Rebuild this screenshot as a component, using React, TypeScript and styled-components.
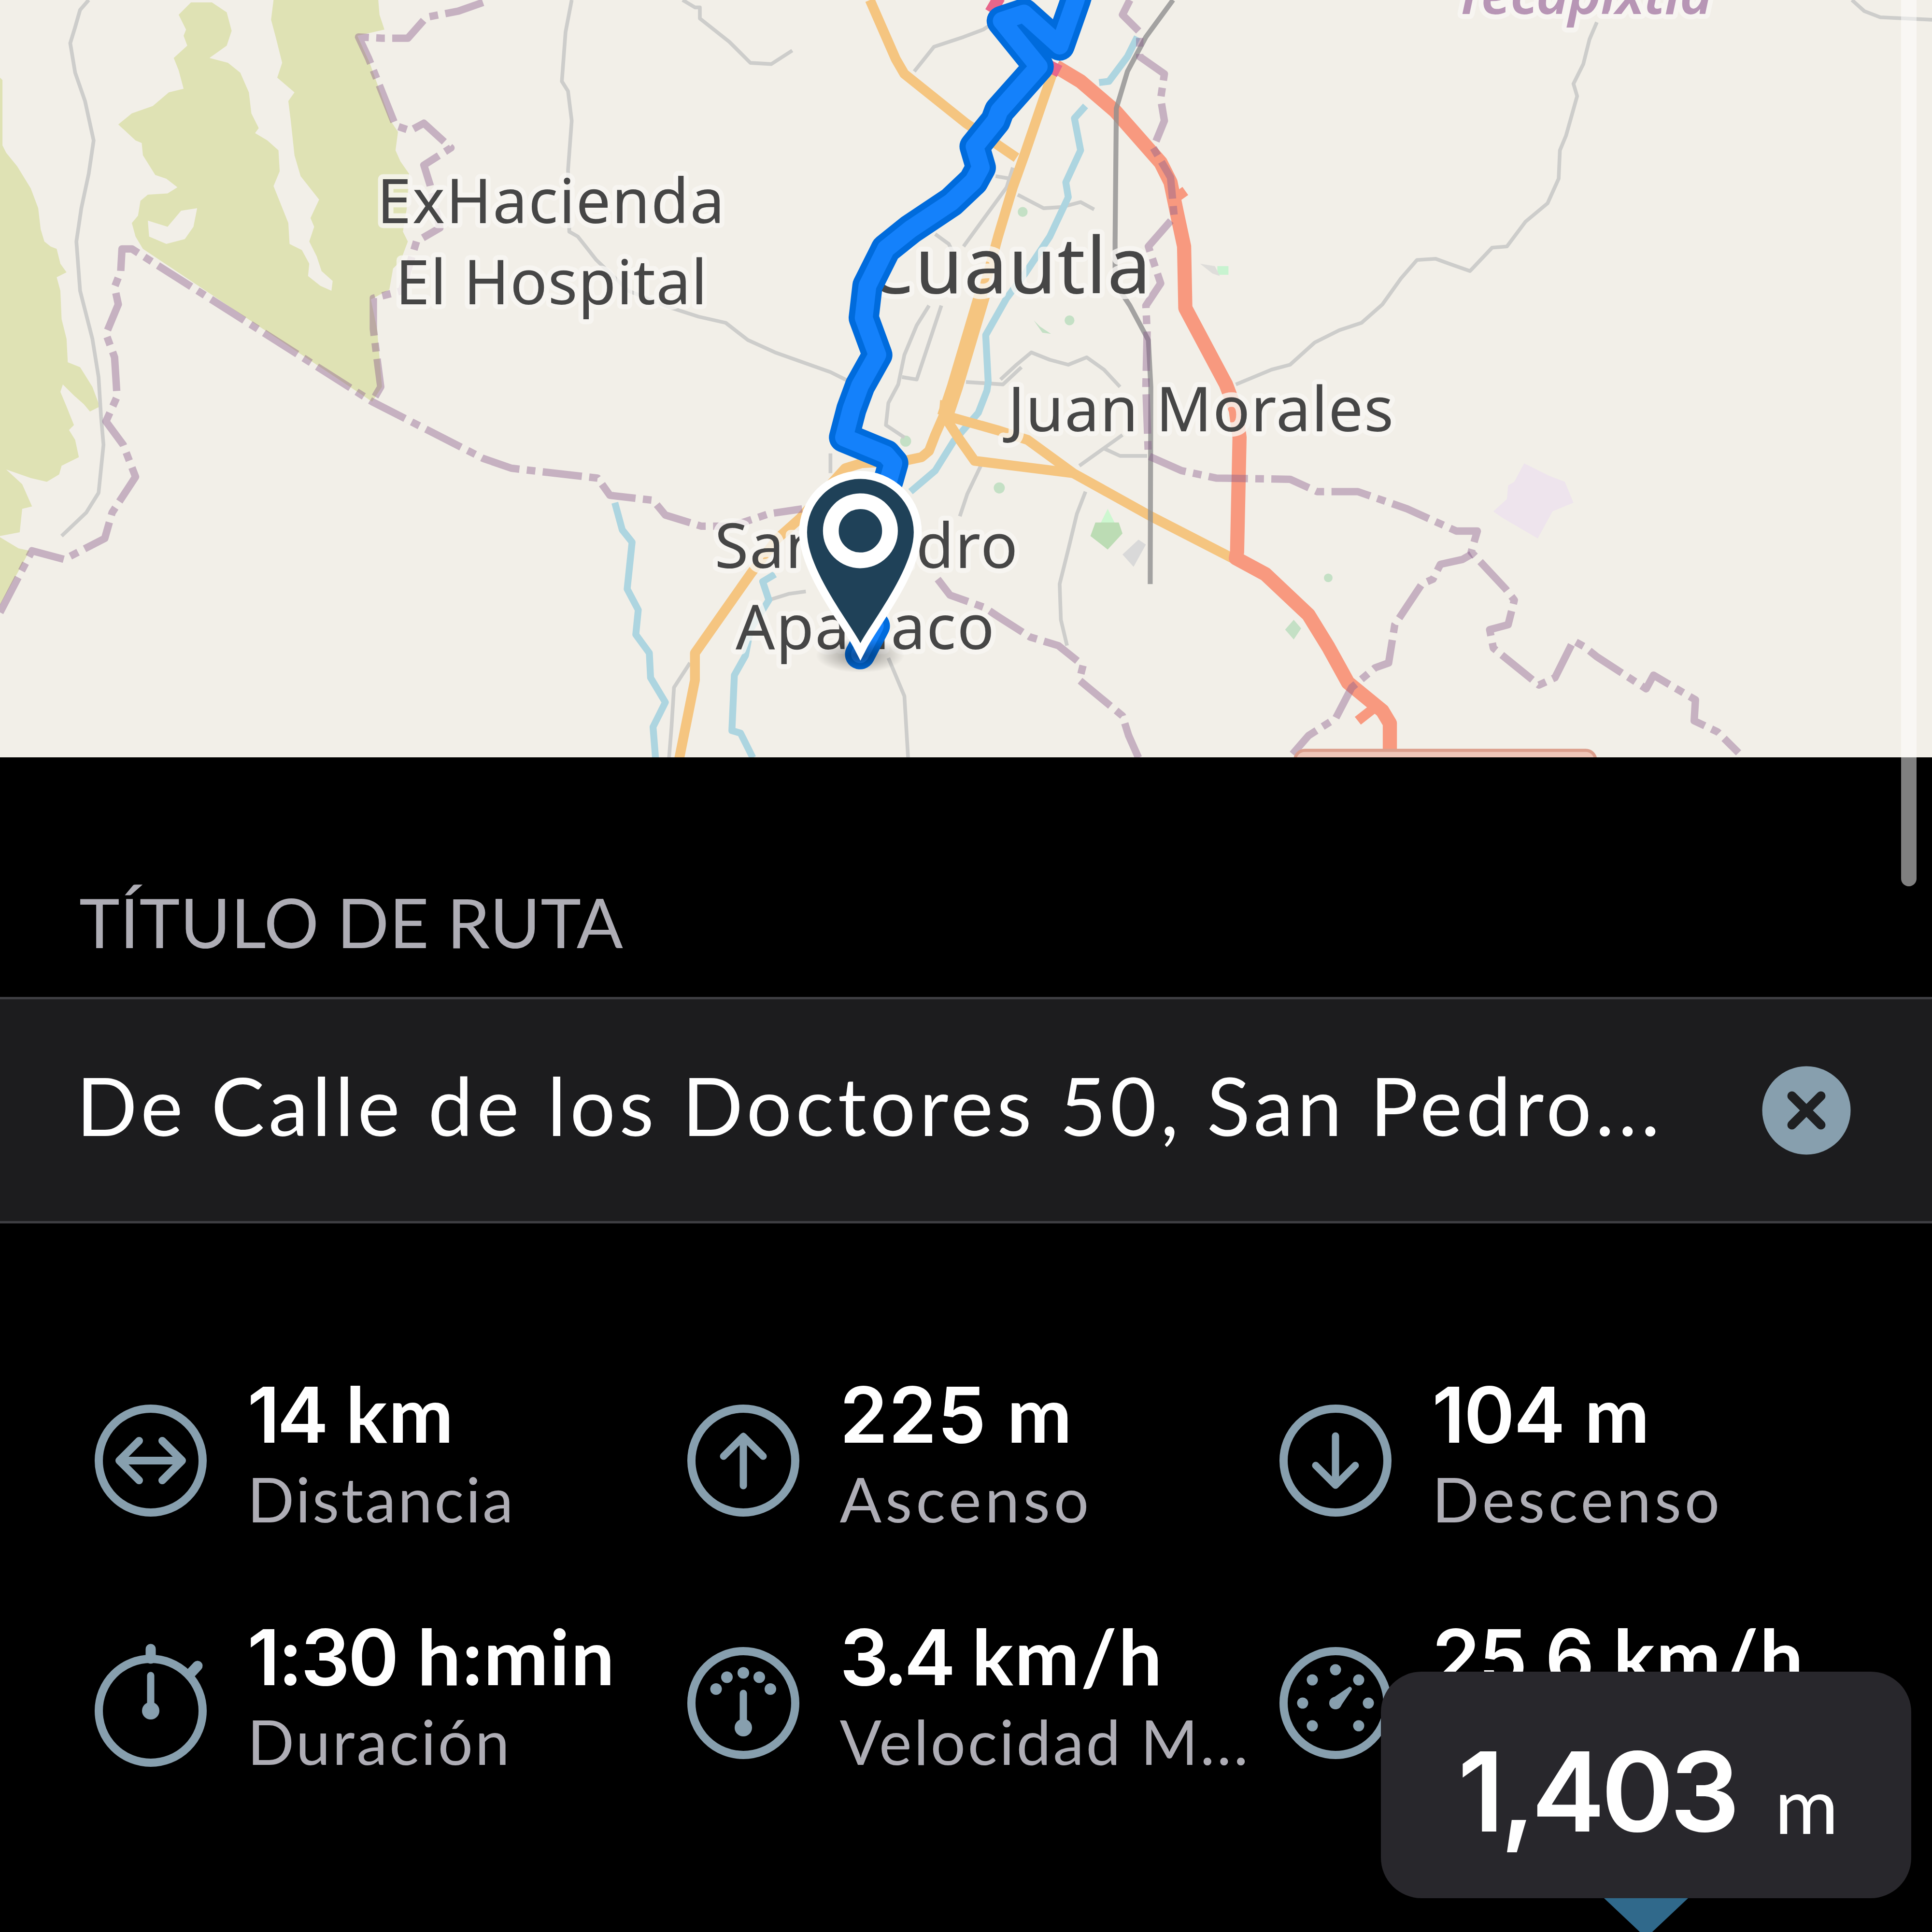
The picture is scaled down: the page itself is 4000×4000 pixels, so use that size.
import React from 'react';
import styled, { createGlobalStyle } from 'styled-components';

const GlobalStyle = createGlobalStyle`
  *{
    box-sizing: border-box;
    margin: 0;
    padding: 0;
  }

  body{
    background: #000;
    font-family: Lato, 'Open Sans', sans-serif;
  }
`;

const Screen = styled.div`
  position: relative;
  width: 4000px;
  height: 4000px;
  overflow: hidden;
  background: #000;
  color: #fff;

  display: flex;
  flex-direction: column;
`;

const MapSvg = styled.svg`
  display: block;
  width: 4000px;
  height: 1568px;
  flex-shrink: 0;
  background: #f2efe8;

  .green{ fill: #dfe2b4; }
  .minor{ fill: none; stroke: #cdcdcb; stroke-width: 3; stroke-linejoin: round; }
  .rail{ fill: none; stroke: #8f8f8f; stroke-opacity: 0.8; stroke-width: 4; stroke-linejoin: round; }
  .river{ fill: none; stroke: #add5e0; stroke-width: 5.6; stroke-linejoin: round; }
  .orange{ fill: none; stroke: #f5c580; stroke-width: 8; stroke-linejoin: round; }
  .red{ fill: none; stroke: #f8997f; stroke-width: 11.5; stroke-linejoin: round; }
  .border{ fill: none; stroke: #8c5f8e; stroke-opacity: 0.43; stroke-width: 6; stroke-dasharray: 32 6 7 6; stroke-linejoin: round; }
`;

const PlaceName = styled.text<{ $size?: number }>`
  font-family: 'Noto Sans', sans-serif;
  font-size: ${p => p.$size || 50}px;
  fill: #464646;
  stroke: #f8f6f2;
  stroke-opacity: 0.8;
  stroke-width: 8px;
  stroke-linejoin: round;
  paint-order: stroke;
`;

const RegionName = styled(PlaceName)`
  font-style: italic;
  font-weight: 600;
  fill: #b795b5;
`;

const Scrollbar = styled.div`
  position: absolute;
  top: -40px;
  right: 32px;
  width: 32px;
  height: 1875px;
  border-radius: 16px;
  background: rgba(255, 255, 255, 0.5);
`;

const SectionTitle = styled.h2`
  height: 496px;
  padding: 0 164px 85px;
  color: #aeadb5;
  font-size: 142px;
  font-weight: 400;
  line-height: 142px;
  letter-spacing: 0.5px;

  display: flex;
  align-items: flex-end;
`;

const Field = styled.div`
  height: 469px;
  padding: 0 168px 0 158px;
  background: #1c1c1e;
  border-top: 5px solid #3e3e42;
  border-bottom: 5px solid #3e3e42;

  display: flex;
  align-items: center;
  justify-content: space-between;

  span{
    padding-bottom: 22px;
    font-size: 166px;
    letter-spacing: 7.9px;
    white-space: nowrap;
  }
`;

const ClearButton = styled.button`
  width: 184px;
  height: 184px;
  border: none;
  background: none;

  svg{
    display: block;
    width: 100%;
    height: 100%;
  }
`;

const Stats = styled.section`
  padding: 323px 0 0 182px;

  display: grid;
  grid-template-columns: repeat(3, 1226.5px);
  grid-auto-rows: 501.5px;
`;

const Stat = styled.div`
  height: 336px;

  display: flex;
  align-items: center;
  gap: 70px;
`;

const StatIcon = styled.svg`
  width: 260px;
  height: 260px;
  flex-shrink: 0;
  overflow: visible;
  fill: none;
  stroke: #879fae;
  stroke-width: 17;
  stroke-linecap: round;
  stroke-linejoin: round;

  .dot{
    fill: #879fae;
    stroke: none;
  }
`;

const StatText = styled.div`
  padding-bottom: 20px;
  white-space: nowrap;
`;

const Value = styled.strong`
  display: block;
  height: 177px;
  font-size: 160px;
  font-weight: 700;
  line-height: 165px;
  letter-spacing: 3px;
`;

const Digits = styled.span<{ $tracking: number }>`
  font-family: Inter, sans-serif;
  font-weight: 600;
  letter-spacing: ${p => p.$tracking}px;
`;

const Label = styled.p<{ $tracking: number }>`
  height: 165px;
  color: #aeadb5;
  font-size: 128px;
  line-height: 165px;
  letter-spacing: ${p => p.$tracking}px;
`;

const Tooltip = styled.div`
  position: absolute;
  left: 2859px;
  top: 3461px;
  width: 1098px;
  height: 469px;
  border-radius: 84px;
  background: #28272c;
  padding: 0 151px 136px 159px;

  display: flex;
  align-items: flex-end;
  justify-content: space-between;

  b{
    font-family: Inter, sans-serif;
    font-size: 228px;
    font-weight: 600;
    line-height: 170px;
    letter-spacing: -8px;
  }

  small{
    font-size: 160px;
    line-height: 118px;
  }
`;

const Pointer = styled.svg`
  position: absolute;
  left: 3321px;
  top: 3930px;
  width: 174px;
  height: 82px;
`;

const minorRoads = [
  '72,0 65,8 61,22 57,35 61,59 69,82 76,114 72,141 66,169 62,196 65,236 75,275 80,306 82,338 84,361 80,400 70,416 50,435',
  '464,0 459,26 456,66 461,74 464,98 461,138 462,188 469,192 484,211 510,236 542,249 567,257 589,262 607,276 629,286 674,302 688,309',
  '554,0 564,6 568,6 568,15 592,34 609,51 626,52 643,41',
  '742,58 758,38 782,30 798,24 810,16',
  '1296,18 1290,32 1285,52 1277,68 1280,78 1271,110 1266,122 1265,145 1256,165 1238,180 1223,200 1211,201 1193,220 1176,214 1165,210 1150,211 1137,226 1122,247 1105,262 1087,268 1067,278 1047,296 1032,300 1003,312',
  '1503,0 1513,9 1526,14 1568,16',
  '822,136 817,152 782,200',
  '820,145 808,143',
  '754,248 744,264 734,288 729,312 721,327 719,345 734,355',
  '759,190 770,198 776,210',
  '764,248 752,284 744,308 732,306',
  '826,158 847,169 862,168 877,164 888,170',
  '812,308 825,296 837,286 852,292 867,296 882,290 896,300 909,314',
  '784,310 814,312 829,298',
  '624,487 640,482 654,480',
  '674,368 674,384',
  '560,538 547,558 545,590 543,615',
  '721,534 734,565 737,615',
  '779,419 785,401 796,378',
  '911,353 876,378',
  '881,399 874,417 867,446 860,474 861,503 866,524',
  '896,364 909,370 931,370',
];

const rivers = [
  '923,30 915,46 900,66 892,67',
  '881,86 872,96 877,122 865,148 867,160 852,192 832,222 817,242 800,272 802,310 801,317 794,335 774,358 759,382 739,399',
  '629,466 619,472 624,487 609,511 605,532 596,548 594,593 601,595 611,615',
  '499,408 505,430 513,440 509,478 518,495 516,515 527,530 528,550 540,570 530,590 532,615',
];

const borders = [
  '392,2 372,9 346,14 331,31 310,31 291,30 299,47 321,102 333,106 344,100 366,120 355,127 344,134 349,150 357,185 338,196 326,236 303,242 303,267 306,291 309,314 302,326',
  '0,497 26,447 52,454 85,437 91,416 110,387 100,361 86,342 95,322 93,290 86,271 96,247 93,233 98,220 99,202 107,202 302,326 392,372 415,380 485,388 495,402 530,406 540,418 569,427 594,427 624,417 651,413',
  '761,470 771,483 799,493 811,501 836,517 859,524 879,540 876,552 911,581 916,597 924,615',
  '917,0 911,12 925,26 925,46 945,60 942,80 945,98 936,120 950,144 953,176 932,200 942,230 930,248 931,270 930,314 932,370 959,382 987,388 1047,389 1069,399 1102,399 1142,413 1182,431 1199,431 1194,448 1222,478 1229,487 1224,507 1209,511 1212,526 1249,556 1262,550 1277,520 1286,525 1296,533 1336,559 1342,548 1376,568 1375,585 1394,594 1411,611',
  '1194,450 1187,454 1169,458 1163,470 1154,474 1132,507 1127,538 1116,542 1097,558 1084,583 1062,597 1049,612',
];

const route = '879,-20 873,0 860,37 831,11 813,17 843,54 811,90 808,98 791,119 796,136 790,147 772,164 739,186 719,202 704,232 701,258 712,288 698,313 691,332 685,355 719,369 725,376 721,390 700,440 682,484 710,508 698,531';

const stats = [
  { value: '14', unit: ' km', label: 'Distancia', icon: 'distance', tracking: -6, labelTracking: 4 },
  { value: '225', unit: ' m', label: 'Ascenso', icon: 'up', tracking: 1.5, labelTracking: 7.8 },
  { value: '104', unit: ' m', label: 'Descenso', icon: 'down', tracking: -2, labelTracking: 7 },
  { value: '1:30', unit: ' h:min', label: 'Duración', icon: 'time', tracking: -4, labelTracking: 4.3 },
  { value: '3.4', unit: ' km/h', label: 'Velocidad M...', icon: 'average', tracking: -8, labelTracking: 4.4 },
  { value: '25.6', unit: ' km/h', label: '', icon: 'max', tracking: -3, labelTracking: 4 },
];

function RouteMap() {
  return (
    <MapSvg viewBox="0 0 1568 614.66" preserveAspectRatio="none">
      <polygon className="green" points="0,63 2,65 2,118 5,124 14,135 25,153 31,169 33,186 36,196 41,200 46,202 49,214 54,221 46,225 49,236 50,259 54,275 55,294 65,298 75,314 81,330 73,334 68,328 60,321 51,312 49,318 54,330 60,345 56,349 61,357 64,371 50,378 48,385 38,391 25,388 5,381 18,393 26,411 18,413 16,432 0,435" />
      <polygon className="green" points="0,436 15,445 24,447 0,491" />
      <path
        className="green"
        fillRule="evenodd"
        d="M155 2L145 12 151 24 149 29 152 37 141 47 145 57 149 72 137 75 124 86 107 92 96 101 110 114 115 116 116 126 126 142 135 145 144 152 136 157 120 158 114 163 112 175 107 181 110 192 116 202 302 326 310 314 306 267 301 243 316 235 319 218 325 212 331 196 327 188 330 170 332 141 325 131 321 122 323 107 317 98 300 51 290 29 312 24 308 12 307 0 222 0 220 16 224 31 229 51 225 63 239 75 234 82 236 98 239 126 244 143 259 162 252 177 255 184 251 196 257 208 261 220 270 228 269 236 260 232 250 224 251 214 245 203 235 198 234 181 226 161 222 151 227 139 226 122 217 114 207 108 210 104 204 92 202 75 195 59 185 51 170 47 184 37 188 25 184 10 172 2ZM120 179L136 184 147 171 160 169 157 184 150 194 135 198 121 192Z"
      />
      <polygon fill="#eee4ed" points="1237,376 1257,386 1270,391 1277,408 1260,415 1248,437 1219,420 1212,415 1223,405 1224,394 1229,391" />
      <polygon fill="#cdf7d0" points="899,413 893,425 905,425" />
      <polygon fill="#bcdcb4" points="889,424 908,424 911,433 899,446 885,435" />
      <polygon fill="#d9d9d9" points="911,450 924,438 930,442 920,460" />
      <g fill="#c4e0c5">
        <circle cx="811" cy="396" r="4.5" />
        <circle cx="735" cy="358" r="4.5" />
        <circle cx="1078" cy="469" r="3.5" />
        <circle cx="868" cy="260" r="4" />
        <circle cx="830" cy="172" r="4" />
        <polygon points="1050,503 1056,510 1050,519 1043,511" />
        <polygon fill="#c8f3d0" points="988,216 997,216 997,223 988,223" />
        <polygon points="839,260 844,265 853,271 846,270" />
      </g>
      <path d="M974 214L986 216 990 224 984 222Z" fill="#deddda" />

      {minorRoads.map(points => <polyline key={points} className="minor" points={points} />)}
      {rivers.map(points => <polyline key={points} className="river" points={points} />)}

      <polyline className="orange" points="706,0 727,48 734,60 784,100 825,128" />
      <polyline className="orange" points="854,60 845,86 832,124 822,152 810,192 797,240" />
      <polyline className="orange" style={{ strokeWidth: 13 }} points="797,240 775,314 767,338" />
      <polyline className="orange" points="767,325 766,337 759,353 754,366 748,371 734,374 699,376 686,380 649,421 631,437 609,466 564,530 564,552 551,617" />
      <polyline className="orange" points="766,337 809,349 834,357 871,384 934,419 1004,455" />
      <polyline className="orange" points="766,337 779,357 791,374 831,379 871,384" />
      <path d="M804 10L811 -2" stroke="#e8668a" strokeWidth="10" />
      <polyline className="red" points="857,54 877,66 905,90 942,132 950,148 955,172 961,200 962,250 995,312 1003,333 1006,355 1004,448 1003,453 1027,466 1062,499 1078,525 1094,554 1122,577 1128,587 1128,612" />
      <path className="red" d="M1102 585L1116 574M955 160L962 155" style={{ strokeWidth: 8 }} />
      <path d="M852 54L860 58" stroke="#e8668a" strokeWidth="10" />
      <polyline className="rail" points="952,0 930,30 915,58 906,88 905,196 905,230 917,248 932,276 934,314 933.5,474" />
      {borders.map(points => <polyline key={points} className="border" points={points} />)}
      <rect x="1051" y="609" width="244" height="40" rx="8" fill="#eec5b7" stroke="#dc9f8d" strokeWidth="2.5" />

      <PlaceName x="306" y="181" textLength="282">ExHacienda</PlaceName>
      <PlaceName x="321" y="247" textLength="253">El Hospital</PlaceName>
      <PlaceName x="702" y="238" textLength="232" $size={63}>Cuautla</PlaceName>
      <PlaceName x="818" y="350" textLength="313">Juan Morales</PlaceName>
      <PlaceName x="580" y="461" textLength="246">San Pedro</PlaceName>
      <PlaceName x="597" y="527" textLength="210">Apatlaco</PlaceName>
      <RegionName x="1180" y="11.5" textLength="210" $size={46}>Yecapixtla</RegionName>

      <polyline points={route} fill="none" stroke="#006bdc" strokeWidth="24.5" strokeLinejoin="round" strokeLinecap="round" />
      <polyline points={route} fill="none" stroke="#1481fb" strokeWidth="14.5" strokeLinejoin="round" strokeLinecap="round" />

      <radialGradient id="pinShadow">
        <stop offset="0" stopColor="#000" stopOpacity="0.4" />
        <stop offset="1" stopColor="#000" stopOpacity="0" />
      </radialGradient>
      <ellipse cx="698" cy="532" rx="36" ry="14" fill="url(#pinShadow)" />
      <path
        d="M698.3 522C690 506 655 462 655 432A43.3 43.3 0 0 1 741.6 432C741.6 462 706.6 506 698.3 522Z"
        fill="#1f4158"
        stroke="#fff"
        strokeWidth="13"
        strokeMiterlimit="3"
        paintOrder="stroke"
      />
      <circle cx="698.3" cy="430.8" r="24" fill="#1f4158" stroke="#fff" strokeWidth="12.8" />
    </MapSvg>
  );
}

function StatGlyph({ name }: { name: string }) {
  return (
    <StatIcon viewBox="-130 -130 260 260">
      <circle cx="0" cy={name === 'time' ? 16 : 0} r="107.5" />

      {name === 'distance' && <path strokeWidth="16" d="M-63 0H63M-24 -41L-65 0L-24 41M24 -41L65 0L24 41" />}
      {name === 'up' && <path strokeWidth="15" d="M0 52V-50M-41 -9L0 -50L41 -9" />}
      {name === 'down' && <path strokeWidth="15" d="M0 -51V51M-41 10L0 51L41 10" />}

      {name === 'time' && (
        <>
          <path strokeWidth="21" d="M0 -112V-92M97 -77L84 -63" />
          <path strokeWidth="15" d="M0 -57V16" />
          <circle className="dot" cx="0" cy="16" r="18" />
        </>
      )}

      {name === 'average' && (
        <>
          <path strokeWidth="15" d="M0 -20V51" />
          <circle className="dot" cx="0" cy="51" r="18" />
          {[[0, -62.5], [-34, -53.5], [33, -53.5], [-56.5, -29], [56, -29]].map(([x, y]) => (
            <circle key={x} className="dot" cx={x} cy={y} r="12" />
          ))}
        </>
      )}

      {name === 'max' && (
        <>
          <path className="dot" d="M-9 -8L29 -34Q34 -33 34 -28L9 9Z" />
          <circle className="dot" cx="0" cy="0" r="13" />
          {[[0, -69], [-48, -48], [48, -48], [-68, 0], [68, 0], [-48, 47], [48, 47]].map(([x, y]) => (
            <circle key={`${x},${y}`} className="dot" cx={x} cy={y} r="11.5" />
          ))}
        </>
      )}
    </StatIcon>
  );
}

export default function App() {
  return (
    <>
      <GlobalStyle />
      <Screen>
        <RouteMap />

        <SectionTitle>TÍTULO DE RUTA</SectionTitle>
        <Field>
          <span>De Calle de los Doctores 50, San Pedro...</span>
          <ClearButton aria-label="Borrar">
            <svg viewBox="-92 -92 184 184">
              <circle r="91.5" fill="#879fae" />
              <path d="M-30 -30L30 30M30 -30L-30 30" stroke="#1f2022" strokeWidth="19" strokeLinecap="round" />
            </svg>
          </ClearButton>
        </Field>

        <Stats>
          {stats.map(stat => (
            <Stat key={stat.icon}>
              <StatGlyph name={stat.icon} />
              <StatText>
                <Value><Digits $tracking={stat.tracking}>{stat.value}</Digits>{stat.unit}</Value>
                <Label $tracking={stat.labelTracking}>{stat.label}</Label>
              </StatText>
            </Stat>
          ))}
        </Stats>

        <Tooltip>
          <b>1,403</b>
          <small>m</small>
        </Tooltip>
        <Pointer viewBox="0 0 174 82">
          <path d="M0 0H174L87 82Z" fill="#30698b" />
        </Pointer>
        <Scrollbar />
      </Screen>
    </>
  );
}
